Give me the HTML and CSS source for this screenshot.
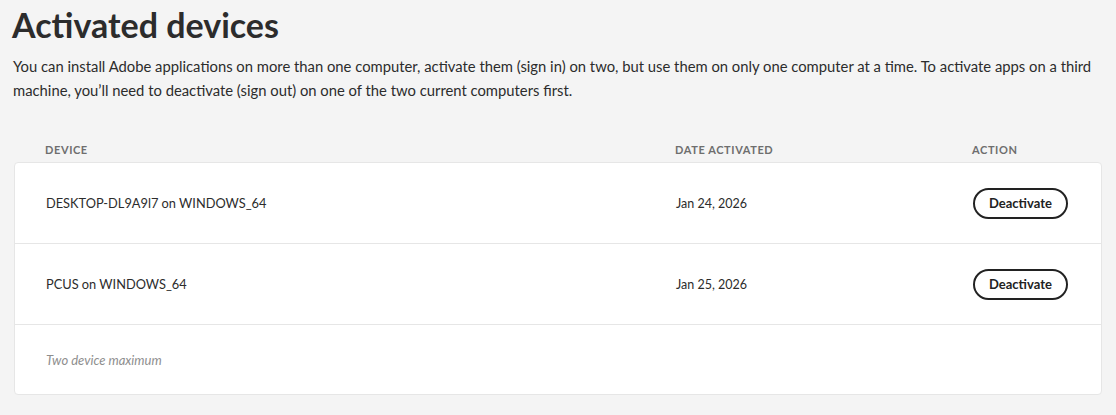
FILE: index.html
```html
<!DOCTYPE html>
<html lang="en">
<head>
    <meta charset="UTF-8">
    <meta name="viewport" content="width=device-width, initial-scale=1.0">
    <title>Activated devices</title>
    <link rel="stylesheet" href="styles.css">
</head>
<body>
    <div class="page">
        <h1>Activated devices</h1>
        <p class="intro">You can install Adobe applications on more than one computer, activate them (sign in) on two, but use them on only one computer at a time. To activate apps on a third machine, you’ll need to deactivate (sign out) on one of the two current computers first.</p>

        <div class="devices">
            <div class="devices-head">
                <span>Device</span>
                <span>Date activated</span>
                <span>Action</span>
            </div>
            <div class="devices-card">
                <div class="device-row">
                    <span>DESKTOP-DL9A9l7 on WINDOWS_64</span>
                    <span>Jan 24, 2026</span>
                    <span><button class="btn-outline">Deactivate</button></span>
                </div>
                <div class="device-row">
                    <span>PCUS on WINDOWS_64</span>
                    <span>Jan 25, 2026</span>
                    <span><button class="btn-outline">Deactivate</button></span>
                </div>
                <div class="devices-note">Two device maximum</div>
            </div>
        </div>
    </div>
</body>
</html>
```

FILE: styles.css
```css
body {
    margin: 0;
    background-color: #f4f4f4;
    color: #2c2c2c;
    font-family: 'Lato', 'Open Sans', sans-serif;
}

.page {
    padding: 0 14px 20px 12px;
}

h1 {
    margin: 0;
    padding-top: 3px;
    font-size: 34px;
    line-height: 43px;
    font-weight: 700;
    color: #2c2c2c;
}

.intro {
    margin: 8px 0 0 1px;
    font-size: 14.8px;
    line-height: 24px;
}

.devices {
    margin-top: 40px;
    padding-left: 2px;
}

.devices-head,
.device-row {
    display: grid;
    grid-template-columns: 630px 297px 1fr;
    align-items: center;
}

.devices-head {
    padding: 0 0 4px 31px;
    font-size: 11px;
    line-height: 16px;
    font-weight: 700;
    text-transform: uppercase;
    letter-spacing: 0.6px;
    color: #6e6e6e;
}

.devices-card {
    background-color: #fff;
    border: 1px solid #e6e6e6;
    border-radius: 4px;
}

.device-row {
    height: 80px;
    padding-left: 31px;
    font-size: 12.5px;
    border-bottom: 1px solid #e6e6e6;
}

.device-row > span:first-child {
    font-size: 12.8px;
}

.btn-outline {
    height: 31px;
    padding: 0 14px;
    border: 2px solid #222;
    border-radius: 16px;
    background: #fff;
    color: #222;
    font-family: inherit;
    font-size: 13px;
    font-weight: 700;
    cursor: pointer;
}

.devices-note {
    height: 69px;
    display: flex;
    align-items: center;
    padding-left: 31px;
    font-size: 13px;
    font-style: italic;
    color: #8e8e8e;
}
```
